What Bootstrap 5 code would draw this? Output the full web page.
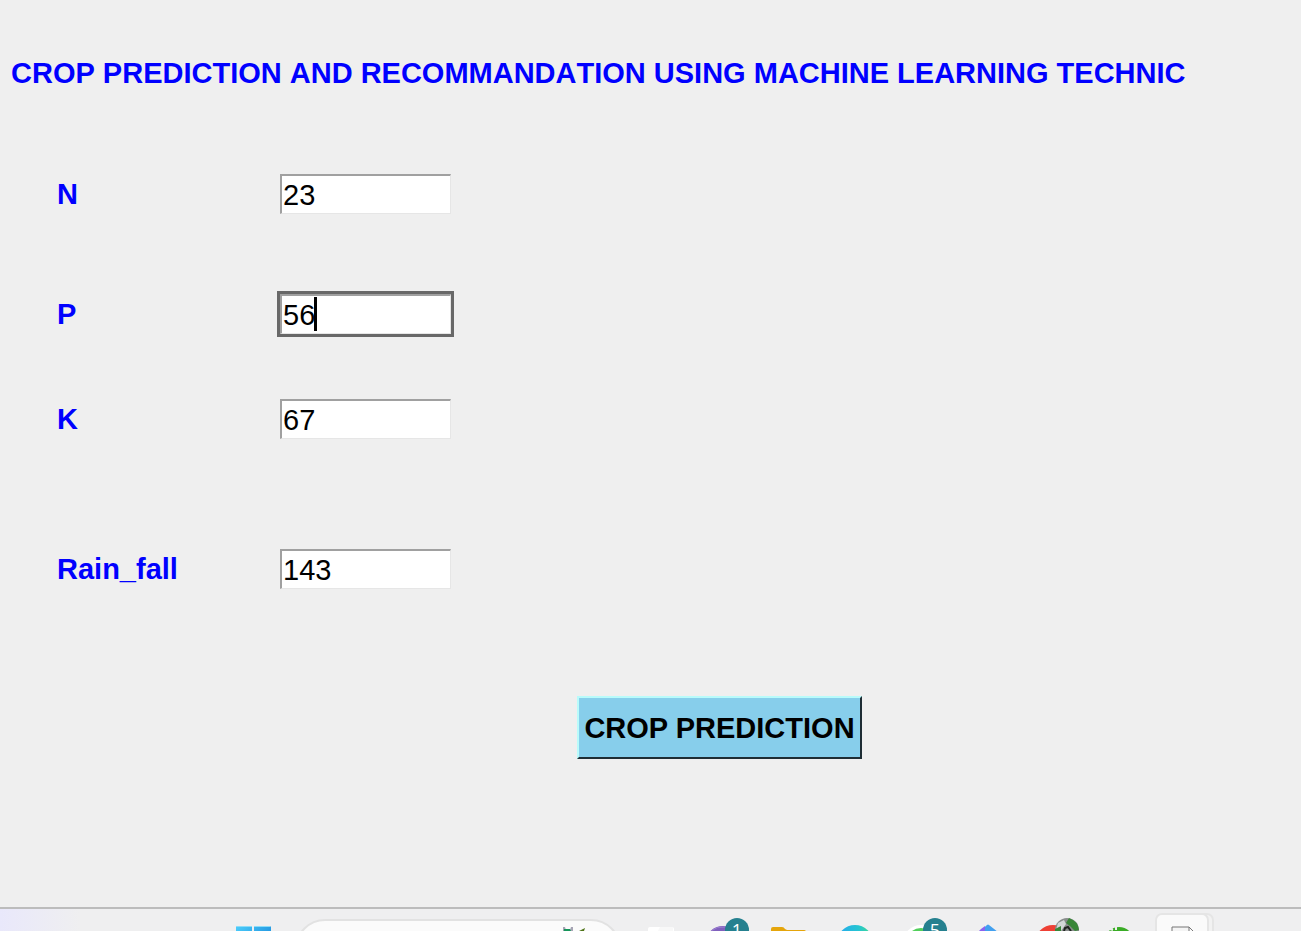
<!DOCTYPE html>
<html lang="en">
<head>
<meta charset="utf-8">
<meta name="viewport" content="width=device-width, initial-scale=1">
<title>Crop Prediction</title>
<link href="https://cdn.jsdelivr.net/npm/bootstrap@5.3.0/dist/css/bootstrap.min.css" rel="stylesheet">
<style>
  body { background: #efefef; font-family: "Liberation Sans", Arial, sans-serif; font-size: 29px; line-height: 40px; font-kerning: none; color: #000; }
  .tk-label { color: #00f; font-weight: 700; }
  h1.tk-label { font-size: 29px; line-height: 40px; padding: 53px 0 0 11px; margin: 0 0 78px; }
  .fields { padding-left: 57px; }
  .field-name { width: 220px; }
  .entry-wrap { width: 177px; padding: 3px; }
  .entry-wrap.active { background: #686868; }
  .entry { width: 171px; height: 40px; padding: 0 1px; border: 0 solid; border-width: 2px 1px 1px 2px; border-color: #a0a0a0 #e6e6e6 #e6e6e6 #a0a0a0; border-radius: 0; background: #fff; color: #000; outline: 0; }
  .caret { top: 6px; left: 37px; width: 3px; height: 34px; background: #000; }
  .gap-n { margin-bottom: 74px; }
  .gap-p { margin-bottom: 59px; }
  .gap-k { margin-bottom: 104px; }
  .predict { margin: 104px 0 0 577px; width: 285px; height: 63px; padding: 0; background: #87ceeb; border: 2px solid; border-color: #b8fbfb #1e2d34 #1e2d34 #b8fbfb; font-weight: 700; white-space: nowrap; }
  .taskbar { height: 24px; border-top: 2px solid #bcbcbc; background: linear-gradient(90deg, #e9e8fb 0, #efeff0 80px); }
  .taskbar svg { display: block; }
  .start { margin: 17px 24px 0 235px; }
  .search { width: 326px; height: 60px; margin: 10px 6px 0 0; border: 2px solid #e2e2e2; border-radius: 30px; background: #fbfbfb; }
  .search svg { margin: 6px 30px 0 0; }
  .slot { width: 66px; height: 22px; }
  .count { top: 9px; left: 32px; width: 24px; height: 24px; border-radius: 50%; background: #25808f; color: #fff; font: 18px/24px "Open Sans", sans-serif; text-align: center; }
</style>
</head>
<body>
<div class="min-vh-100 d-flex flex-column">
  <main class="flex-grow-1">
    <h1 class="tk-label text-nowrap">CROP PREDICTION AND RECOMMANDATION USING MACHINE LEARNING TECHNIC</h1>
    <form onsubmit="return false">
      <div class="fields">
        <div class="d-flex align-items-center gap-n">
          <label class="tk-label field-name" for="n">N</label>
          <div class="entry-wrap"><input class="entry d-block" id="n" type="text" value="23"></div>
        </div>
        <div class="d-flex align-items-center gap-p">
          <label class="tk-label field-name" for="p">P</label>
          <div class="entry-wrap active position-relative"><input class="entry d-block" id="p" type="text" value="56"><span class="caret position-absolute"></span></div>
        </div>
        <div class="d-flex align-items-center gap-k">
          <label class="tk-label field-name" for="k">K</label>
          <div class="entry-wrap"><input class="entry d-block" id="k" type="text" value="67"></div>
        </div>
        <div class="d-flex align-items-center">
          <label class="tk-label field-name" for="rain">Rain_fall</label>
          <div class="entry-wrap"><input class="entry d-block" id="rain" type="text" value="143"></div>
        </div>
      </div>
      <button class="predict d-block" type="submit">CROP PREDICTION</button>
    </form>
  </main>

  <footer class="taskbar d-flex align-items-start overflow-hidden">
    <svg class="start flex-shrink-0" width="36" height="36" viewBox="0 0 36 36" aria-hidden="true">
      <defs><linearGradient id="w" x2="1" y2="1"><stop stop-color="#4ccdfb"/><stop offset="1" stop-color="#0873cf"/></linearGradient></defs>
      <path fill="url(#w)" d="M2 0h15v17H1V1zM19 0h16l1 1v16H19zM1 19h16v17H1zM19 19h17v17H19z"/>
      <path fill="#8ddcf8" d="M2 0h15v1H1zM19 0h16v1H19z"/>
    </svg>
    <div class="search flex-shrink-0 d-flex justify-content-end align-items-start">
      <svg width="28" height="16" viewBox="0 0 28 16" aria-hidden="true">
        <path fill="#a6a4b4" d="M2 0h2l1 3h4l1-3h2v4l2 2H2z"/><path fill="#16965a" d="M3 2h6l1 2v9H2z"/><path fill="#7ac943" d="M12 4l3 1-2 5z"/><path fill="#4f7418" d="M18 4l6-3-1 3 2 5h-7z"/>
      </svg>
    </div>
    <div class="slot flex-shrink-0"><svg width="66" height="22" aria-hidden="true"><rect x="21" y="18" width="26" height="28" rx="2" fill="#fff"/><path d="M33 18h13v4H31z" fill="#f8f8f8"/></svg></div>
    <div class="slot flex-shrink-0 position-relative"><svg width="66" height="22" aria-hidden="true"><circle cx="30" cy="35" r="18" fill="#8060bd"/><path d="M18 22q6-5 14-4" stroke="#9b7ed0" fill="none"/></svg><span class="count position-absolute">1</span></div>
    <div class="slot flex-shrink-0"><svg width="66" height="22" aria-hidden="true"><path fill="#e5a50b" d="M12 20q0-2 2-2h9q2 0 3 2l2 1h17q2 0 2 2v10H12z"/></svg></div>
    <div class="slot flex-shrink-0"><svg width="66" height="22" aria-hidden="true"><defs><linearGradient id="e"><stop stop-color="#26a8ef"/><stop offset=".6" stop-color="#25c5d1"/><stop offset="1" stop-color="#45db87"/></linearGradient></defs><circle cx="30" cy="34" r="18" fill="url(#e)"/></svg></div>
    <div class="slot flex-shrink-0 position-relative"><svg width="66" height="22" aria-hidden="true"><circle cx="30" cy="34" r="18" fill="#fff"/><circle cx="30" cy="34" r="15" fill="#52cf5b"/></svg><span class="count position-absolute">5</span></div>
    <div class="slot flex-shrink-0"><svg width="66" height="22" aria-hidden="true"><path fill="#42a0ef" d="M30 16q1-1 2 0l14 11H18z"/><path fill="#8c62ef" d="M24 20l4-3v5h-6z"/></svg></div>
    <div class="slot flex-shrink-0"><svg width="66" height="22" aria-hidden="true"><circle cx="30" cy="34" r="18" fill="#ee4035"/><circle cx="44" cy="21" r="12" fill="#898d8c"/><path fill="#d3d8d8" d="M35 14l6-3 2 4-5 7-5-1z"/><path fill="#398638" d="M46 9q9 3 10 12l-4 1-5-5-4-3zM32 20l6-3v5h-6z"/><path d="M41 22l1-3 3-1 3 4" stroke="#202421" stroke-width="2" fill="none"/></svg></div>
    <div class="slot flex-shrink-0"><svg width="66" height="22" aria-hidden="true"><circle cx="30" cy="33" r="15" fill="#3aac26"/><path d="M21 20l3 1M27 17v4M23 18l1 1" stroke="#efefef" stroke-width="2"/></svg></div>
    <div class="slot flex-shrink-0"><svg width="66" height="22" aria-hidden="true"><rect x="8" y="5" width="50" height="50" rx="6" fill="#f2f2f2" stroke="#e5e5e5" stroke-width="2"/><rect x="1" y="5" width="52" height="50" rx="6" fill="#fafafa" stroke="#e5e5e5" stroke-width="2"/><path d="M17 30V18h17l5 5V30M34 18v5h5" stroke="#777" fill="#f5f5f5"/></svg></div>
  </footer>
</div>
<script src="https://cdn.jsdelivr.net/npm/bootstrap@5.3.0/dist/js/bootstrap.bundle.min.js"></script>
</body>
</html>
